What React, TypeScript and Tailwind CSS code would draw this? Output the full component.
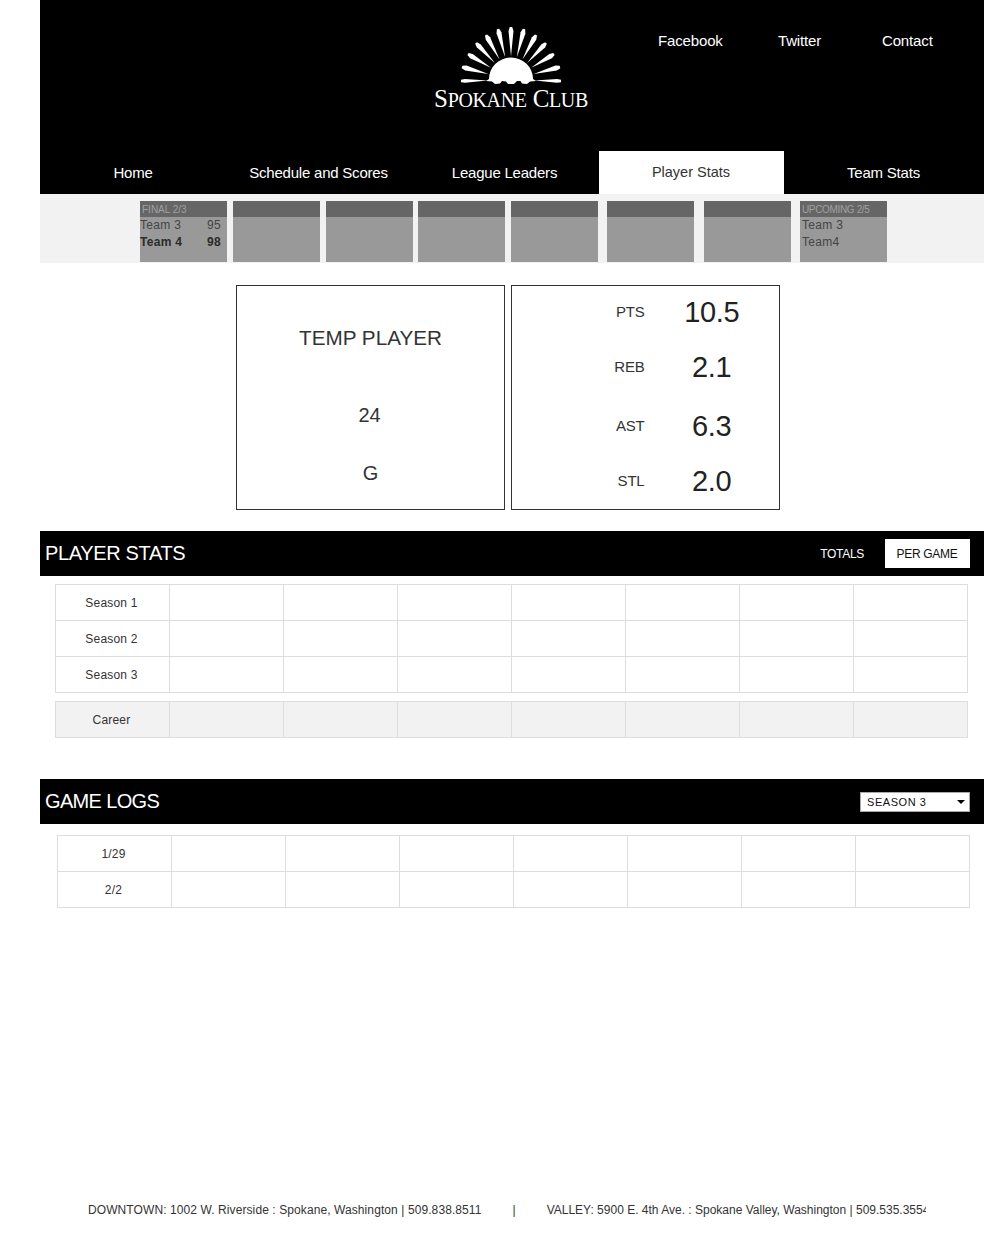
const sans = "font-['Liberation_Sans',Arial,sans-serif]";

const rayEnds: [number, number][] = [
  [5, 56], [6, 42], [12, 29], [20, 18], [30, 10], [42, 4], [55, 2],
  [68, 4], [80, 10], [90, 18], [98, 29], [104, 42], [105, 56],
];

function Logo() {
  const cx = 55;
  const cy = 55;
  return (
    <svg width="110" height="62" viewBox="0 0 110 62" className="block">
      {rayEnds.map(([x, y], i) => {
        const dx = x - cx;
        const dy = y - cy;
        const len = Math.hypot(dx, dy) || 1;
        const ux = dx / len;
        const uy = dy / len;
        const nx = -uy;
        const ny = ux;
        const r = 23.5;
        const ix = cx + ux * r;
        const iy = cy + uy * r;
        const mx = x - ux * 4;
        const my = y - uy * 4;
        const flat = i === 0 || i === 12;
        const w = flat ? 1.8 : 2.5;
        return (
          <polygon
            key={i}
            points={`${x + nx * 1.2},${y + ny * 1.2} ${mx + nx * w},${my + ny * w} ${ix},${iy} ${mx - nx * w},${my - ny * w} ${x - nx * 1.2},${y - ny * 1.2}`}
            fill="#fff"
          />
        );
      })}
      <path
        d="M33 54 A22 21.5 0 0 1 77 54 L80 56 L74 56.5 L71 59 L66 58.5 L64.5 56 L61 56 L58 59 L52 59 L50 56.5 L46 56 L44 58.5 L39 59 L36 56.5 L30 56 Z"
        fill="#fff"
      />
    </svg>
  );
}

function Grid({ first, bg = "" }: { first: string; bg?: string }) {
  return (
    <>
      <div className={`flex items-center justify-center border-r border-[#dddddd] pr-[2px] tracking-[0.2px] ${bg}`}>{first}</div>
      {Array.from({ length: 7 }).map((_, i) => (
        <div key={i} className={`${i < 6 ? "border-r" : ""} border-[#dddddd] ${bg}`} />
      ))}
    </>
  );
}

function Table({ rows, bg = "", className = "" }: { rows: string[]; bg?: string; className?: string }) {
  return (
    <div
      className={`grid w-[913px] grid-cols-[114px_114px_114px_114px_114px_114px_114px_1fr] border border-[#dddddd] text-[12px] text-[#333333] ${className}`}
    >
      {rows.map((r, i) => (
        <div key={r} className={`col-span-8 grid grid-cols-subgrid ${i > 0 ? "h-[36px] border-t border-[#dddddd]" : "h-[35px]"}`}>
          <Grid first={r} bg={bg} />
        </div>
      ))}
    </div>
  );
}

function ScoreCard({ title, a, b, ml, bold, pad }: { title?: string; a?: string; b?: string; ml: string; bold?: boolean; pad?: boolean }) {
  return (
    <div className={`h-[61px] w-[87px] shrink-0 bg-[#999999] ${ml}`}>
      <div className={`h-[16px] bg-[#666666] pl-[2px] pt-[1px] text-[10px] leading-[16px] text-[#a0a0a0] ${pad ? "tracking-[-0.35px]" : ""}`}>{title}</div>
      {a && (
        <div className={`text-[12px] leading-[17px] tracking-[0.3px] text-[#444444] ${pad ? "pl-[2px]" : ""}`}>
          <div className="flex justify-between pr-[6px]">
            <span>{a}</span>
            {bold && <span>95</span>}
          </div>
          <div className={`flex justify-between pr-[6px] ${bold ? "font-bold text-[#2b2b2b]" : ""}`}>
            <span>{b}</span>
            {bold && <span>98</span>}
          </div>
        </div>
      )}
    </div>
  );
}

function Stat({ label, value, h }: { label: string; value: string; h: string }) {
  return (
    <div className={`flex items-center ${h}`}>
      <div className="w-[133px] text-right text-[15px] tracking-[-0.2px] text-[#333333]">{label}</div>
      <div className="w-[135px] text-center text-[29px] leading-none tracking-[-0.3px] text-[#222222]">{value}</div>
    </div>
  );
}

function SectionBar({ title, tracking, children, className = "" }: { title: string; tracking: string; children: React.ReactNode; className?: string }) {
  return (
    <div className={`flex h-[45px] items-center justify-between bg-black pl-[5px] pr-[14px] text-white ${className}`}>
      <div className={`pb-[2px] text-[20px] ${tracking}`}>{title}</div>
      {children}
    </div>
  );
}

export default function App() {
  return (
    <div className={`h-[1238px] w-[984px] overflow-hidden bg-white pl-[40px] ${sans}`}>
      <header className="h-[194px] bg-black text-white">
        <div className="flex h-[151px]">
          <div className="ml-[393px] flex w-[156px] shrink-0 flex-col items-center pt-[25px]">
            <Logo />
            <div className="mt-[-3px] flex items-baseline whitespace-nowrap font-['Liberation_Serif',serif] text-[20px] leading-[30px] tracking-[-0.35px]">
              <span className="text-[25px]">S</span>
              <span>POKANE</span>
              <span className="ml-[6px] text-[25px]">C</span>
              <span>LUB</span>
            </div>
          </div>
          <nav className="ml-[69px] flex pt-[32px] text-[15px] leading-[18px] tracking-[-0.15px]">
            <span className="w-[65px] whitespace-nowrap">Facebook</span>
            <span className="ml-[55px] w-[42px] whitespace-nowrap">Twitter</span>
            <span className="ml-[62px] whitespace-nowrap">Contact</span>
          </nav>
        </div>
        <div className="grid h-[43px] grid-cols-[186px_185px_188px_185px_200px] text-center text-[15px] leading-[43px] tracking-[-0.22px]">
          <div>Home</div>
          <div>Schedule and Scores</div>
          <div className="pr-[1px]">League Leaders</div>
          <div className="bg-white pr-[1px] text-[14.5px] tracking-normal text-[#333333]">Player Stats</div>
          <div className="pr-[1px]">Team Stats</div>
        </div>
      </header>

      <div className="flex h-[69px] bg-[#f2f2f2] pl-[100px] pt-[7px]">
        <ScoreCard title="FINAL 2/3" a="Team 3" b="Team 4" bold ml="" />
        <ScoreCard ml="ml-[6px]" />
        <ScoreCard ml="ml-[6px]" />
        <ScoreCard ml="ml-[5px]" />
        <ScoreCard ml="ml-[6px]" />
        <ScoreCard ml="ml-[9px]" />
        <ScoreCard ml="ml-[10px]" />
        <ScoreCard title="UPCOMING 2/5" a="Team 3" b="Team4" pad ml="ml-[9px]" />
      </div>

      <div className="ml-[196px] mt-[22px] flex gap-[6px]">
        <div className="flex h-[225px] w-[269px] flex-col items-center border border-[#333333] text-[#333333]">
          <div className="mt-[39px] text-[20.7px] leading-[26px]">TEMP PLAYER</div>
          <div className="mt-[52px] pr-[2px] text-[20px] leading-[24px]">24</div>
          <div className="mt-[34px] text-[20px] leading-[24px]">G</div>
        </div>
        <div className="h-[225px] w-[269px] border border-[#333333] pt-[1px]">
          <Stat label="PTS" value="10.5" h="h-[50px]" />
          <Stat label="REB" value="2.1" h="mt-[5px] h-[50px]" />
          <Stat label="AST" value="6.3" h="mt-[9px] h-[50px]" />
          <Stat label="STL" value="2.0" h="mt-[5px] h-[50px]" />
        </div>
      </div>

      <SectionBar title="PLAYER STATS" tracking="tracking-[-0.35px]" className="mt-[21px]">
        <div className="flex items-center text-[12px] tracking-[-0.3px]">
          <span>TOTALS</span>
          <span className="ml-[21px] flex h-[29px] w-[85px] items-center justify-center bg-white pr-[1px] text-[#111111]">PER GAME</span>
        </div>
      </SectionBar>

      <Table rows={["Season 1", "Season 2", "Season 3"]} className="ml-[15px] mt-[8px]" />
      <Table rows={["Career"]} bg="bg-[#f2f2f2]" className="ml-[15px] mt-[8px]" />

      <SectionBar title="GAME LOGS" tracking="tracking-[-0.65px]" className="mt-[41px]">
        <div className="flex h-[20px] w-[110px] items-center justify-between border border-[#a9a9a9] bg-white pl-[6px] pr-[4px] pt-[1px] text-[11px] tracking-[0.55px] text-[#111111]">
          <span>SEASON 3</span>
          <span className="h-0 w-0 border-x-[4px] border-t-[4px] border-x-transparent border-t-black" />
        </div>
      </SectionBar>

      <Table rows={["1/29", "2/2"]} className="ml-[17px] mt-[11px]" />

      <div className="ml-[48px] mt-[293px] w-[838px] overflow-hidden whitespace-nowrap text-[12px] leading-[18px] text-[#333333]">
        <span className="tracking-[0.09px]">DOWNTOWN: 1002 W. Riverside : Spokane, Washington | 509.838.8511</span>
        <span className="ml-[31px]">|</span>
        <span className="ml-[31px]">VALLEY: 5900 E. 4th Ave. : Spokane Valley, Washington | 509.535.3554</span>
      </div>
    </div>
  );
}
